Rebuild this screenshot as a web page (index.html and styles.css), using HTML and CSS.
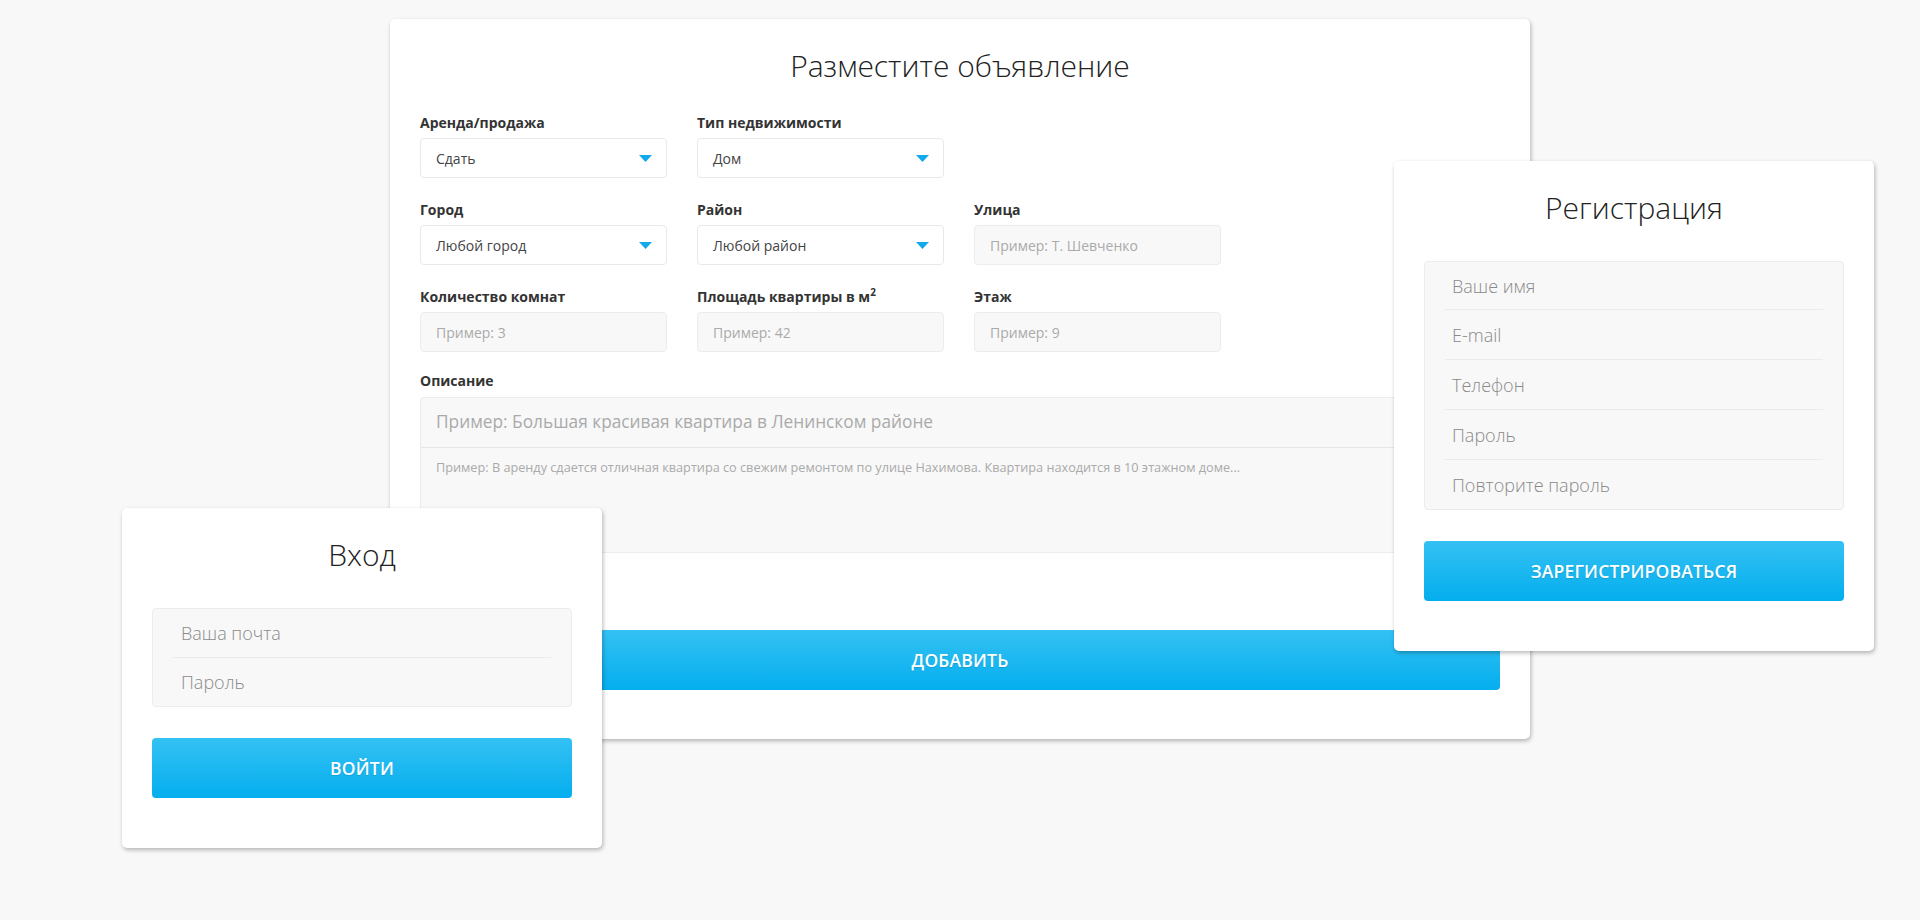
FILE: index.html
```html
<!DOCTYPE html>
<html lang="ru">
<head>
<meta charset="utf-8">
<title>Разместите объявление</title>
<link rel="stylesheet" href="styles.css">
</head>
<body>
<div class="canvas">
  <section class="card card-ad">
    <h1 class="card-title">Разместите объявление</h1>
    <div class="grid">
      <div class="field">
        <label class="label">Аренда/продажа</label>
        <div class="select"><span>Сдать</span><svg class="caret" width="13" height="7" viewBox="0 0 13 7"><path d="M0 0h13L6.5 7z"/></svg></div>
      </div>
      <div class="field">
        <label class="label">Тип недвижимости</label>
        <div class="select"><span>Дом</span><svg class="caret" width="13" height="7" viewBox="0 0 13 7"><path d="M0 0h13L6.5 7z"/></svg></div>
      </div>
      <div class="field empty"></div>

      <div class="field">
        <label class="label">Город</label>
        <div class="select"><span>Любой город</span><svg class="caret" width="13" height="7" viewBox="0 0 13 7"><path d="M0 0h13L6.5 7z"/></svg></div>
      </div>
      <div class="field">
        <label class="label">Район</label>
        <div class="select"><span>Любой район</span><svg class="caret" width="13" height="7" viewBox="0 0 13 7"><path d="M0 0h13L6.5 7z"/></svg></div>
      </div>
      <div class="field">
        <label class="label">Улица</label>
        <div class="input">Пример: Т. Шевченко</div>
      </div>

      <div class="field last">
        <label class="label">Количество комнат</label>
        <div class="input">Пример: 3</div>
      </div>
      <div class="field last">
        <label class="label">Площадь квартиры в м<sup>2</sup></label>
        <div class="input">Пример: 42</div>
      </div>
      <div class="field last">
        <label class="label">Этаж</label>
        <div class="input">Пример: 9</div>
      </div>
    </div>

    <div class="desc">
      <label class="label">Описание</label>
      <div class="textarea">
        <div class="ta-title">Пример: Большая красивая квартира в Ленинском районе</div>
        <div class="ta-body">Пример: В аренду сдается отличная квартира со свежим ремонтом по улице Нахимова. Квартира находится в 10 этажном доме...</div>
      </div>
    </div>

    <button class="btn btn-add">Добавить</button>
  </section>

  <section class="card card-login">
    <h2 class="card-title">Вход</h2>
    <div class="group">
      <div class="row">Ваша почта</div>
      <div class="row">Пароль</div>
    </div>
    <button class="btn">Войти</button>
  </section>

  <section class="card card-reg">
    <h2 class="card-title">Регистрация</h2>
    <div class="group group-reg">
      <div class="row">Ваше имя</div>
      <div class="row">E-mail</div>
      <div class="row">Телефон</div>
      <div class="row">Пароль</div>
      <div class="row">Повторите пароль</div>
    </div>
    <button class="btn">Зарегистрироваться</button>
  </section>
</div>
</body>
</html>
```
FILE: styles.css
```css
* { box-sizing: border-box; }

html, body {
  margin: 0;
  padding: 0;
  background: #f8f8f8;
  font-family: "Open Sans", "Liberation Sans", sans-serif;
  color: #333;
}

.canvas {
  position: relative;
  width: 1920px;
  height: 920px;
  overflow: hidden;
}

.card {
  position: absolute;
  background: #fff;
  border-radius: 5px;
  box-shadow: 1px 2px 4px rgba(0, 0, 0, 0.28);
  padding: 26px 30px 50px;
}

.card-ad {
  left: 390px;
  top: 19px;
  width: 1140px;
  height: 720px;
  z-index: 1;
}

.card-login {
  left: 122px;
  top: 508px;
  width: 480px;
  height: 340px;
  z-index: 2;
}

.card-reg {
  left: 1394px;
  top: 161px;
  width: 480px;
  height: 490px;
  z-index: 2;
}

.card-title {
  margin: 0 0 26px;
  font-size: 30px;
  font-weight: 300;
  line-height: 42px;
  text-align: center;
  color: #222;
}

.card-login .card-title,
.card-reg .card-title {
  margin-bottom: 32px;
}

.grid {
  display: grid;
  grid-template-columns: 247px 247px 247px;
  column-gap: 30px;
}

.field { margin-bottom: 22px; }
.field.last { margin-bottom: 19px; }

.label {
  display: block;
  font-size: 14px;
  font-weight: 700;
  line-height: 19px;
  color: #333;
  margin-bottom: 6px;
}

.label sup {
  font-size: 10px;
  line-height: 0;
}

.select,
.input {
  height: 40px;
  border-radius: 4px;
  display: flex;
  align-items: center;
  padding: 0 14px 0 15px;
  font-size: 14px;
}

.select {
  background: #fff;
  border: 1px solid #e9e9e9;
  justify-content: space-between;
  color: #444;
}

.caret { fill: #10a9e9; }

.input {
  background: #f8f8f8;
  border: 1px solid #ececec;
  color: #aaa;
}

.textarea {
  height: 156px;
  background: #f8f8f8;
  border: 1px solid #ececec;
  border-radius: 4px;
}

.ta-title {
  height: 50px;
  line-height: 48px;
  padding: 0 15px;
  font-size: 17.3px;
  color: #aaa;
  border-bottom: 1px solid #e6e6e6;
}

.ta-body {
  padding: 10px 15px;
  font-size: 12.7px;
  line-height: 18px;
  color: #aaa;
}

.desc .label { margin-bottom: 7px; }

.btn {
  display: block;
  width: 100%;
  height: 60px;
  border: 0;
  border-radius: 4px;
  background: linear-gradient(#34c1f3, #04aeee);
  color: #fff;
  font-family: "Open Sans", "Liberation Sans", sans-serif;
  font-size: 17.5px;
  font-weight: 600;
  text-transform: uppercase;
  letter-spacing: 0.2px;
  text-shadow: 0 1px 1px rgba(0, 0, 0, 0.12);
  padding: 0;
}

.btn-add { margin-top: 77px; }

.group {
  background: #f8f8f8;
  border: 1px solid #ececec;
  border-radius: 4px;
  margin-bottom: 31px;
}

.row {
  height: 49px;
  margin: 0 20px;
  padding-left: 8px;
  display: flex;
  align-items: center;
  font-size: 18px;
  font-weight: 300;
  color: #8a8a8a;
  border-bottom: 1px solid #ebebeb;
}

.row:last-child { border-bottom: 0; height: 48px; }

.group-reg .row { height: 50px; padding-left: 7px; }
.group-reg .row:first-child { height: 48px; }
.group-reg .row:last-child { height: 49px; }
```
